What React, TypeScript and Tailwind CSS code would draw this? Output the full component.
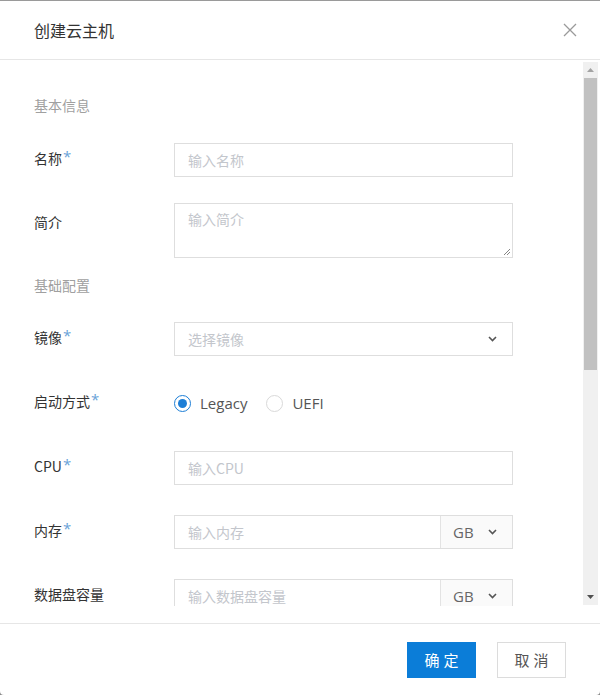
import React from "react";

const cjk = "font-['Noto_Sans_CJK_SC',sans-serif]";
const latin = "font-['Open_Sans','Noto_Sans_CJK_SC',sans-serif]";

function Label({ text, required }: { text: string; required?: boolean }) {
  return (
    <div className="w-[140px] shrink-0 flex items-center pb-[4px] text-[14px] text-[#333]">
      <span>{text}</span>
      {required && (
        <span className={`${latin} ml-[1px] text-[15px] leading-none text-[#6aa3d8] -mt-[3px]`}>*</span>
      )}
    </div>
  );
}

function Chevron() {
  return (
    <svg width="9" height="6" viewBox="0 0 9 6" className="text-[#555]">
      <path d="M1 1 L4.5 4.5 L8 1" fill="none" stroke="currentColor" strokeWidth="1.6" />
    </svg>
  );
}

function TextInput({ placeholder, unit }: { placeholder: string; unit?: boolean }) {
  return (
    <div className="w-[339px] h-[34px] flex border border-[#dedede] bg-white">
      <div className="flex-1 flex items-center pl-[13px] text-[14px] text-[#c3c6cc]">
        {placeholder}
      </div>
      {unit && (
        <div className="w-[72px] flex items-center border-l border-[#e3e3e3] bg-[#fafafa] pl-[12px] gap-[14px]">
          <span className={`${latin} text-[15px] text-[#666]`}>GB</span>
          <Chevron />
        </div>
      )}
    </div>
  );
}

function Radio({ label, checked }: { label: string; checked?: boolean }) {
  return (
    <div className="flex items-center">
      <div
        className={`w-[17px] h-[17px] rounded-full border bg-white flex items-center justify-center ${
          checked ? "border-[#1c7ed6]" : "border-[#d9d9d9]"
        }`}
      >
        {checked && <div className="w-[9px] h-[9px] rounded-full bg-[#1c7ed6]" />}
      </div>
      <span className={`${latin} ml-[9px] text-[15px] text-[#555]`}>{label}</span>
    </div>
  );
}

function Row({ children, className }: { children: React.ReactNode; className?: string }) {
  return <div className={`flex ${className ?? ""}`}>{children}</div>;
}

export default function App() {
  return (
    <div className={`${cjk} w-[600px] h-[695px] bg-[#8a8a8a]`}>
      <div className="w-full h-full bg-white border-t border-[#9a9a9a] rounded-b-[4px] flex flex-col overflow-hidden">
        {/* header */}
        <div className="h-[59px] shrink-0 border-b border-[#e6e6e6] flex items-center justify-between pl-[34px] pr-[23px]">
          <span className="text-[16px] text-[#333]">创建云主机</span>
          <svg width="14" height="14" viewBox="0 0 14 14">
            <path d="M1 1 L13 13 M13 1 L1 13" stroke="#9a9a9a" strokeWidth="1.3" fill="none" />
          </svg>
        </div>

        {/* body */}
        <div className="h-[546px] shrink-0 flex">
          <div className="flex-1 overflow-hidden pl-[34px]">
            <div className="mt-[35px] h-[20px] leading-[20px] text-[14px] text-[#a0a0a0]">基本信息</div>
            <Row className="mt-[28px]">
              <Label text="名称" required />
              <TextInput placeholder="输入名称" />
            </Row>
            <Row className="mt-[26px]">
              <div className="w-[140px] shrink-0 h-[42px] flex items-center pb-[4px] text-[14px] text-[#333]">简介</div>
              <div className="relative w-[339px] h-[55px] border border-[#dedede] pl-[13px] pt-[5px] text-[14px] text-[#c3c6cc]">
                输入简介
                <svg width="8" height="8" viewBox="0 0 8 8" className="absolute right-[1px] bottom-[1px]">
                  <path d="M7 1 L1 7 M7 4 L4 7" stroke="#777" strokeWidth="0.9" />
                </svg>
              </div>
            </Row>
            <div className="mt-[17px] h-[20px] leading-[20px] text-[14px] text-[#a0a0a0]">基础配置</div>
            <Row className="mt-[27px]">
              <Label text="镜像" required />
              <div className="w-[339px] h-[34px] flex items-center justify-between border border-[#dedede] pl-[13px] pr-[15px] text-[14px] text-[#c3c6cc]">
                <span>选择镜像</span>
                <Chevron />
              </div>
            </Row>
            <Row className="mt-[30px] h-[34px]">
              <Label text="启动方式" required />
              <div className="flex items-center gap-[19px]">
                <Radio label="Legacy" checked />
                <Radio label="UEFI" />
              </div>
            </Row>
            <Row className="mt-[31px]">
              <Label text="CPU" required />
              <TextInput placeholder="输入CPU" />
            </Row>
            <Row className="mt-[30px]">
              <Label text="内存" required />
              <TextInput placeholder="输入内存" unit />
            </Row>
            <Row className="mt-[30px]">
              <Label text="数据盘容量" />
              <TextInput placeholder="输入数据盘容量" unit />
            </Row>
          </div>

          {/* scrollbar */}
          <div className="w-[15px] mr-[2px] mt-[2px] mb-[1px] bg-[#f0f0f0] flex flex-col items-center">
            <div className="h-[16px] w-full flex items-center justify-center">
              <svg width="7" height="4" viewBox="0 0 7 4">
                <path d="M0 4 L3.5 0 L7 4 Z" fill="#a3a3a3" />
              </svg>
            </div>
            <div className="w-[13px] h-[292px] bg-[#c1c1c1]" />
            <div className="flex-1" />
            <div className="h-[16px] w-full flex items-center justify-center">
              <svg width="7" height="4" viewBox="0 0 7 4">
                <path d="M0 0 L3.5 4 L7 0 Z" fill="#505050" />
              </svg>
            </div>
          </div>
        </div>

        {/* gap then footer */}
        <div className="h-[17px] shrink-0" />
        <div className="flex-1 border-t border-[#e6e6e6] flex justify-end items-start pt-[18px] pr-[34px] gap-[21px]">
          <button className="w-[69px] h-[36px] bg-[#0b7dd8] text-white text-[15px] tracking-[4px] pl-[4px]">
            确定
          </button>
          <button className="w-[69px] h-[36px] bg-white border border-[#dcdcdc] text-[#555] text-[15px] tracking-[4px] pl-[4px]">
            取消
          </button>
        </div>
      </div>
    </div>
  );
}
